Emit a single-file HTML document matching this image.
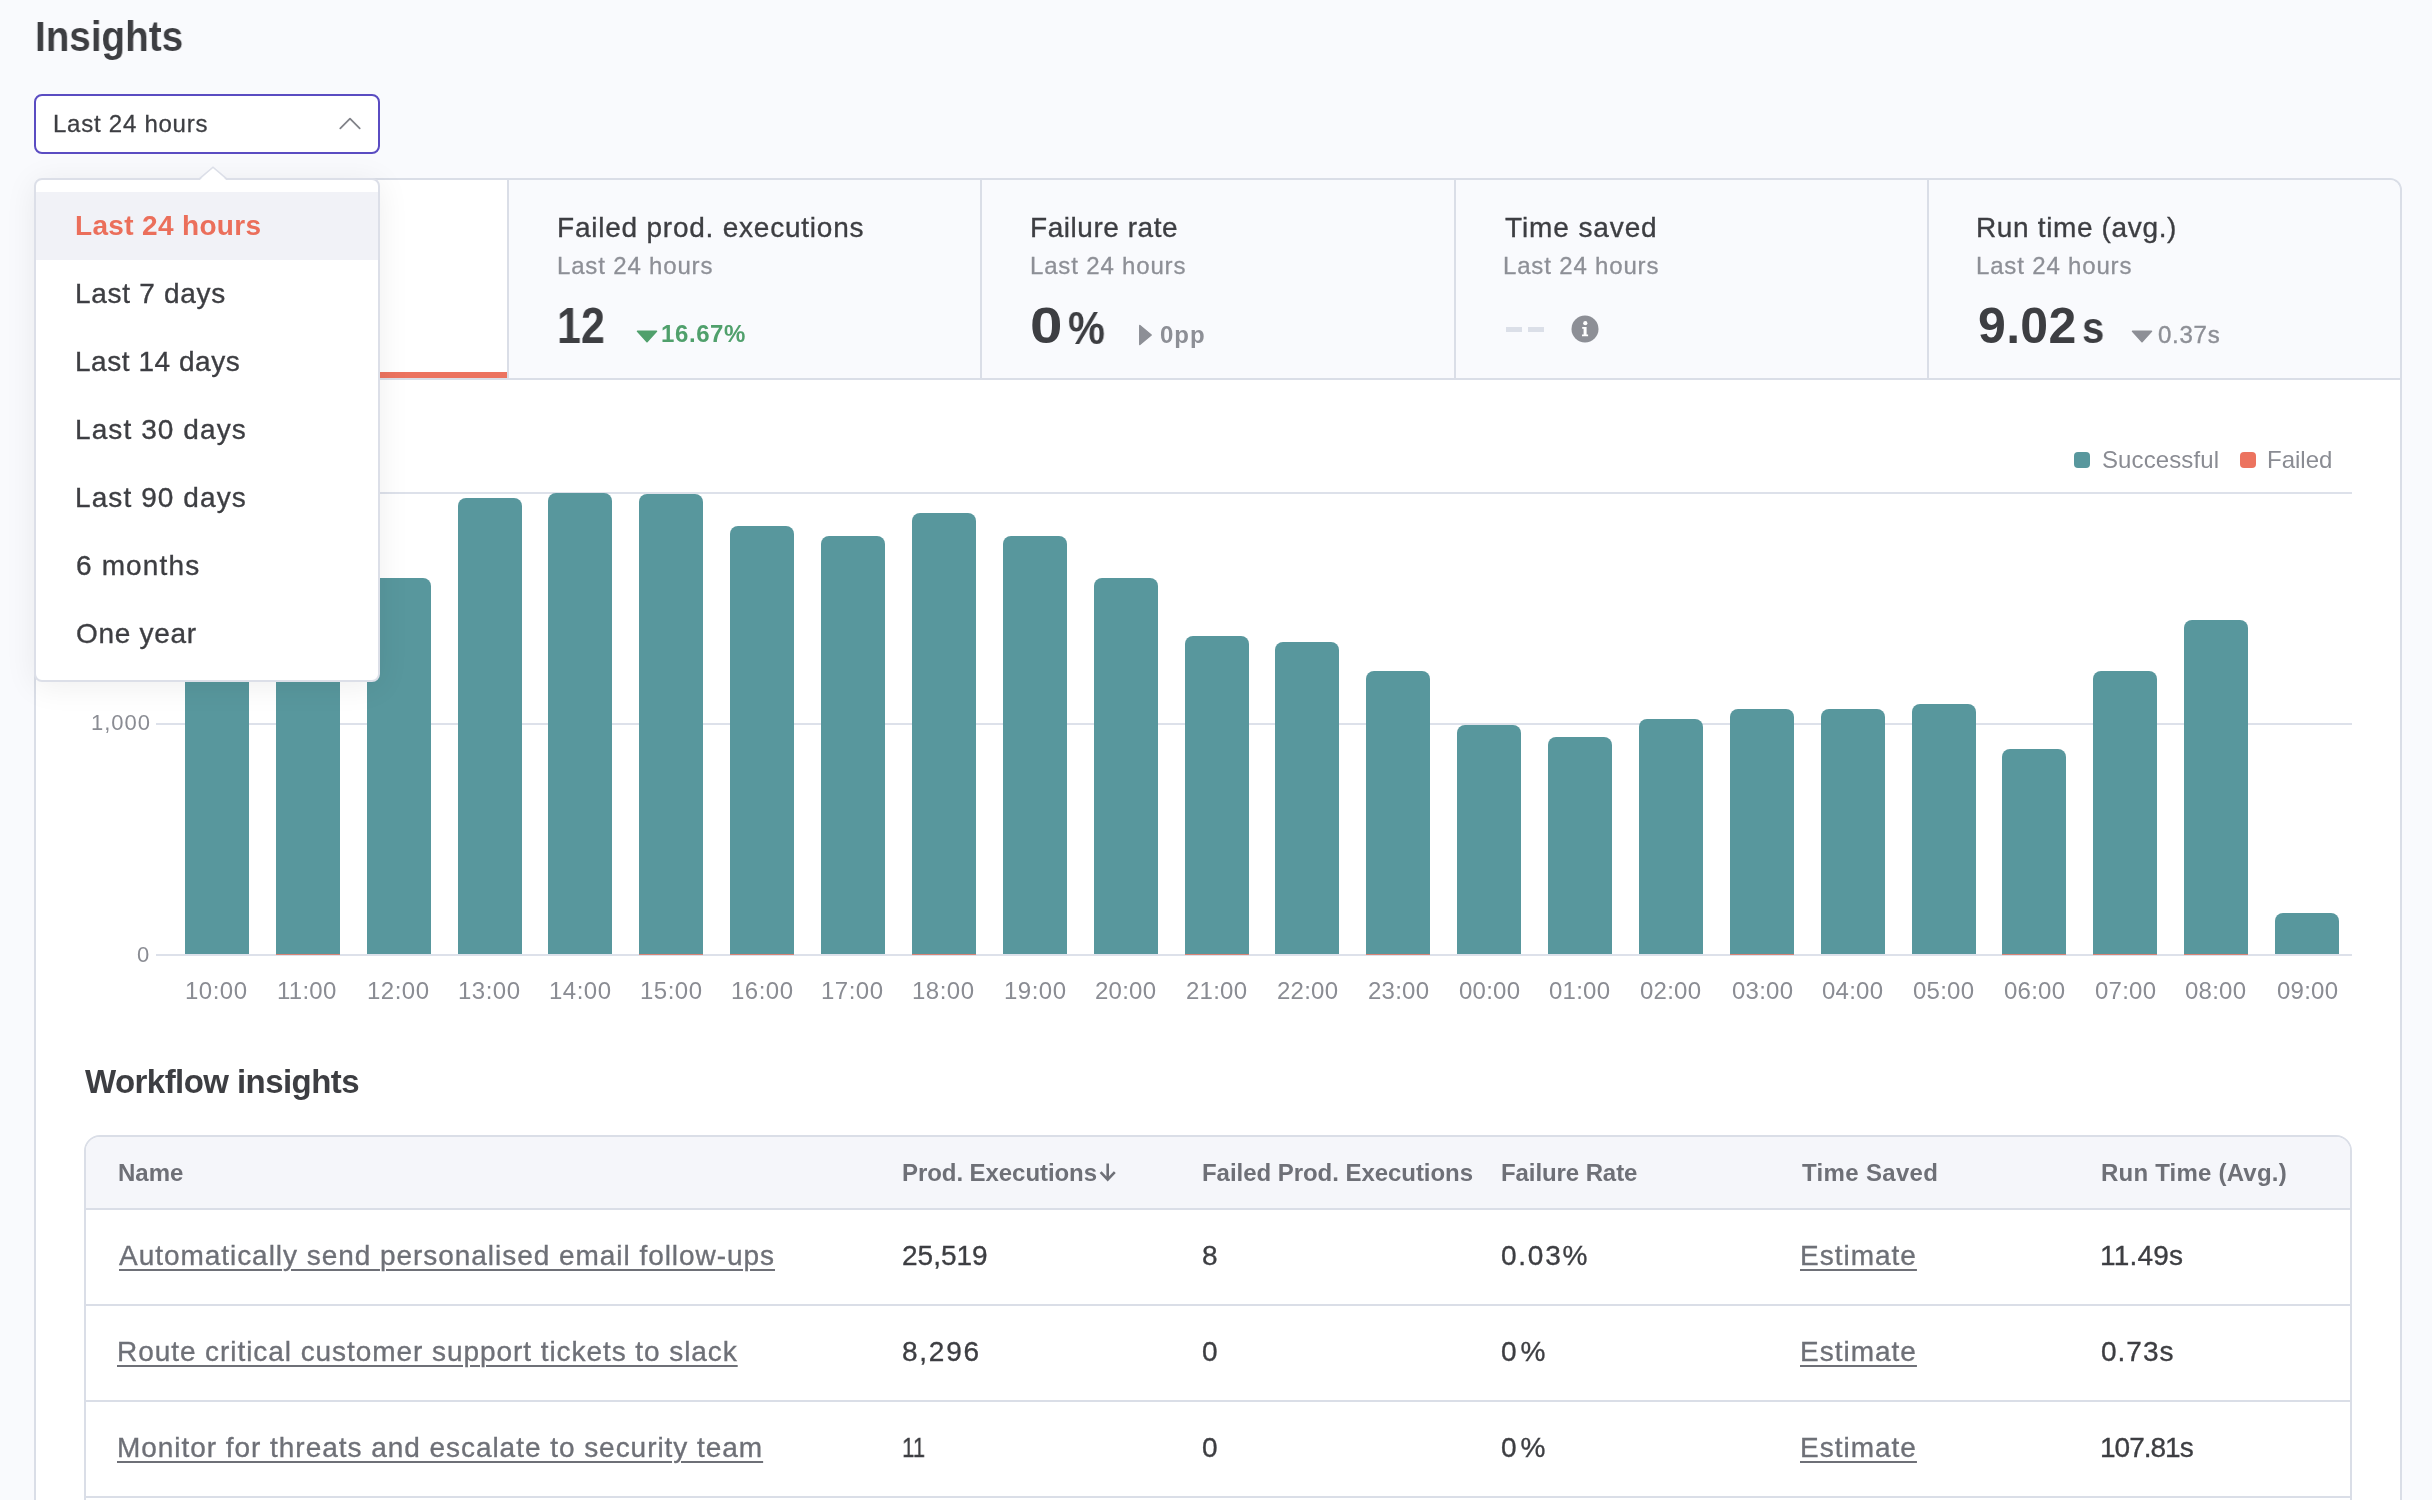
<!DOCTYPE html>
<html><head><meta charset="utf-8"><title>Insights</title>
<style>
html,body{margin:0;padding:0;width:2432px;height:1500px;overflow:hidden;background:#f9fafd;}
body{font-family:"Liberation Sans",sans-serif;}
#root{position:relative;width:2432px;height:1500px;overflow:hidden;background:#f9fafd;}
.t{position:absolute;white-space:nowrap;line-height:1;will-change:transform;}
.abs{position:absolute;}
.box{position:absolute;}
</style></head><body><div id="root">
<div class="t" style="left:35.00px;top:15.94px;font-size:42px;color:#3d3e42;font-weight:700;transform:scaleX(0.9196);transform-origin:0 0;">Insights</div>
<div class="box" style="left:34px;top:94px;width:346px;height:60px;border:2px solid #5a4cc2;border-radius:8px;background:#fff;box-sizing:border-box"></div>
<div class="t" style="left:53.00px;top:111.68px;font-size:24px;color:#3d3e42;-webkit-text-stroke:0.29px #3d3e42;letter-spacing:0.750px;">Last 24 hours</div>
<svg class="abs" style="left:336px;top:114px" width="28" height="18" viewBox="0 0 28 18"><path d="M4.3 14.3 L14 4.7 L23.7 14.3" fill="none" stroke="#808288" stroke-width="1.8" stroke-linecap="round" stroke-linejoin="round"/></svg>
<div class="box" style="left:34px;top:178px;width:2368px;height:1500px;border:2px solid #dadee7;border-radius:12px;background:#fff;box-sizing:border-box;overflow:hidden"><div class="abs" style="left:0;top:0;width:2364px;height:198px;background:#f9fafd"></div><div class="abs" style="left:0;top:0;width:473px;height:198px;background:#fff"></div><div class="abs" style="left:0;top:192px;width:471px;height:6px;background:#ec735f"></div><div class="abs" style="left:0;top:198px;width:2364px;height:2px;background:#dadee7"></div><div class="abs" style="left:471px;top:0;width:2px;height:198px;background:#dadee7"></div><div class="abs" style="left:944px;top:0;width:2px;height:198px;background:#dadee7"></div><div class="abs" style="left:1418px;top:0;width:2px;height:198px;background:#dadee7"></div><div class="abs" style="left:1891px;top:0;width:2px;height:198px;background:#dadee7"></div></div>
<div class="t" style="left:557.00px;top:214.29px;font-size:28px;color:#3d3e42;-webkit-text-stroke:0.34px #3d3e42;letter-spacing:0.773px;">Failed prod. executions</div>
<div class="t" style="left:557.00px;top:253.68px;font-size:24px;color:#8d8f96;-webkit-text-stroke:0.29px #8d8f96;letter-spacing:0.833px;">Last 24 hours</div>
<div class="t" style="left:1030.00px;top:214.29px;font-size:28px;color:#3d3e42;-webkit-text-stroke:0.34px #3d3e42;letter-spacing:0.545px;">Failure rate</div>
<div class="t" style="left:1030.00px;top:253.68px;font-size:24px;color:#8d8f96;-webkit-text-stroke:0.29px #8d8f96;letter-spacing:0.833px;">Last 24 hours</div>
<div class="t" style="left:1505.00px;top:214.29px;font-size:28px;color:#3d3e42;-webkit-text-stroke:0.34px #3d3e42;letter-spacing:0.889px;">Time saved</div>
<div class="t" style="left:1503.00px;top:253.68px;font-size:24px;color:#8d8f96;-webkit-text-stroke:0.29px #8d8f96;letter-spacing:0.833px;">Last 24 hours</div>
<div class="t" style="left:1976.00px;top:214.29px;font-size:28px;color:#3d3e42;-webkit-text-stroke:0.34px #3d3e42;letter-spacing:0.643px;">Run time (avg.)</div>
<div class="t" style="left:1976.00px;top:253.68px;font-size:24px;color:#8d8f96;-webkit-text-stroke:0.29px #8d8f96;letter-spacing:0.833px;">Last 24 hours</div>
<div class="t" style="left:86.00px;top:214.29px;font-size:28px;color:#3d3e42;-webkit-text-stroke:0.34px #3d3e42;">Prod. executions</div>
<div class="t" style="left:86.00px;top:253.68px;font-size:24px;color:#8d8f96;-webkit-text-stroke:0.29px #8d8f96;">Last 24 hours</div>
<div class="t" style="left:557.00px;top:301.17px;font-size:50px;color:#3d3e42;font-weight:700;transform:scaleX(0.8610);transform-origin:0 0;">12</div>
<svg class="abs" style="left:636px;top:330px" width="22" height="13" viewBox="0 0 22 13"><path d="M1.5 1.2 L20.5 1.2 L11 11.8 Z" fill="#50a06c" stroke="#50a06c" stroke-width="1.5" stroke-linejoin="round"/></svg>
<div class="t" style="left:661.00px;top:321.68px;font-size:24px;color:#50a06c;font-weight:700;letter-spacing:0.600px;">16.67%</div>
<div class="t" style="left:1030.00px;top:301.17px;font-size:50px;color:#3d3e42;font-weight:700;transform:scaleX(1.1667);transform-origin:0 0;">0</div>
<div class="t" style="left:1068.00px;top:303.71px;font-size:47px;color:#3d3e42;font-weight:700;transform:scaleX(0.8838);transform-origin:0 0;">%</div>
<svg class="abs" style="left:1138px;top:324px" width="15" height="22" viewBox="0 0 15 22"><path d="M1.8 1.5 L13.2 11 L1.8 20.5 Z" fill="#8d8f96" stroke="#8d8f96" stroke-width="1.5" stroke-linejoin="round"/></svg>
<div class="t" style="left:1160.00px;top:322.68px;font-size:24px;color:#8d8f96;font-weight:700;letter-spacing:1.000px;">0pp</div>
<div class="abs" style="left:1506px;top:327px;width:16px;height:5px;background:#dbdfe8"></div>
<div class="abs" style="left:1528px;top:327px;width:16px;height:5px;background:#dbdfe8"></div>
<svg class="abs" style="left:1571px;top:315px" width="28" height="28" viewBox="0 0 28 28"><circle cx="14" cy="14" r="13.5" fill="#8d8f96"/><circle cx="14.3" cy="8.2" r="2.1" fill="#fff"/><path d="M11.2 12 H15.6 V19.4 H17.1 V21.2 H11 V19.4 H12.6 V13.7 H11.2 Z" fill="#fff"/></svg>
<div class="t" style="left:1978.00px;top:301.17px;font-size:50px;color:#3d3e42;font-weight:700;letter-spacing:0.333px;">9.02</div>
<div class="t" style="left:2082.00px;top:305.40px;font-size:45px;color:#3d3e42;font-weight:700;transform:scaleX(0.8889);transform-origin:0 0;">s</div>
<svg class="abs" style="left:2131px;top:330px" width="22" height="13" viewBox="0 0 22 13"><path d="M1.5 1.2 L20.5 1.2 L11 11.8 Z" fill="#8d8f96" stroke="#8d8f96" stroke-width="1.5" stroke-linejoin="round"/></svg>
<div class="t" style="left:2158.00px;top:322.68px;font-size:24px;color:#8d8f96;letter-spacing:0.750px;-webkit-text-stroke:0.4px #8d8f96;">0.37s</div>
<div class="abs" style="left:2074px;top:452px;width:16px;height:16px;border-radius:4px;background:#58979d"></div>
<div class="t" style="left:2102.00px;top:447.68px;font-size:24px;color:#8a8c93;letter-spacing:0.111px;-webkit-text-stroke:0px;">Successful</div>
<div class="abs" style="left:2240px;top:452px;width:16px;height:16px;border-radius:4px;background:#ec735f"></div>
<div class="t" style="left:2267.00px;top:447.68px;font-size:24px;color:#8a8c93;-webkit-text-stroke:0px;">Failed</div>
<div class="abs" style="left:156px;top:492px;width:2196px;height:2px;background:#dde1ea"></div>
<div class="abs" style="left:156px;top:723px;width:2196px;height:2px;background:#dde1ea"></div>
<div class="abs" style="left:156px;top:954px;width:2196px;height:2px;background:#dde1ea"></div>
<div class="t" style="left:92.00px;top:481.37px;font-size:22px;color:#8a8c93;letter-spacing:0.500px;-webkit-text-stroke:0px;">2,000</div>
<div class="t" style="left:91.00px;top:712.37px;font-size:22px;color:#8a8c93;letter-spacing:1.000px;-webkit-text-stroke:0px;">1,000</div>
<div class="t" style="left:137.00px;top:944.37px;font-size:22px;color:#8a8c93;-webkit-text-stroke:0px;">0</div>
<div class="abs" style="left:185.00px;top:600px;width:64px;height:354px;border-radius:8px 8px 0 0;background:#58979d"></div>
<div class="t" style="left:185.00px;top:978.68px;font-size:24px;color:#8a8c93;letter-spacing:0.500px;-webkit-text-stroke:0px;">10:00</div>
<div class="abs" style="left:275.87px;top:610px;width:64px;height:344px;border-radius:8px 8px 0 0;background:#58979d"></div>
<div class="abs" style="left:275.87px;top:954px;width:64px;height:1px;background:#d98476"></div>
<div class="t" style="left:277.17px;top:978.68px;font-size:24px;color:#8a8c93;letter-spacing:0.250px;-webkit-text-stroke:0px;">11:00</div>
<div class="abs" style="left:366.74px;top:578px;width:64px;height:376px;border-radius:8px 8px 0 0;background:#58979d"></div>
<div class="t" style="left:367.35px;top:978.68px;font-size:24px;color:#8a8c93;letter-spacing:0.500px;-webkit-text-stroke:0px;">12:00</div>
<div class="abs" style="left:457.61px;top:498px;width:64px;height:456px;border-radius:8px 8px 0 0;background:#58979d"></div>
<div class="t" style="left:457.63px;top:978.68px;font-size:24px;color:#8a8c93;letter-spacing:0.500px;-webkit-text-stroke:0px;">13:00</div>
<div class="abs" style="left:548.48px;top:493px;width:64px;height:461px;border-radius:8px 8px 0 0;background:#58979d"></div>
<div class="t" style="left:548.70px;top:978.68px;font-size:24px;color:#8a8c93;letter-spacing:0.500px;-webkit-text-stroke:0px;">14:00</div>
<div class="abs" style="left:639.35px;top:494px;width:64px;height:460px;border-radius:8px 8px 0 0;background:#58979d"></div>
<div class="abs" style="left:639.35px;top:954px;width:64px;height:1px;background:#d98476"></div>
<div class="t" style="left:639.87px;top:978.68px;font-size:24px;color:#8a8c93;letter-spacing:0.500px;-webkit-text-stroke:0px;">15:00</div>
<div class="abs" style="left:730.22px;top:525.5px;width:64px;height:428.5px;border-radius:8px 8px 0 0;background:#58979d"></div>
<div class="abs" style="left:730.22px;top:954px;width:64px;height:1px;background:#d98476"></div>
<div class="t" style="left:731.33px;top:978.68px;font-size:24px;color:#8a8c93;letter-spacing:0.500px;-webkit-text-stroke:0px;">16:00</div>
<div class="abs" style="left:821.09px;top:536px;width:64px;height:418px;border-radius:8px 8px 0 0;background:#58979d"></div>
<div class="t" style="left:821.22px;top:978.68px;font-size:24px;color:#8a8c93;letter-spacing:0.500px;-webkit-text-stroke:0px;">17:00</div>
<div class="abs" style="left:911.96px;top:512.5px;width:64px;height:441.5px;border-radius:8px 8px 0 0;background:#58979d"></div>
<div class="abs" style="left:911.96px;top:954px;width:64px;height:1px;background:#d98476"></div>
<div class="t" style="left:912.39px;top:978.68px;font-size:24px;color:#8a8c93;letter-spacing:0.500px;-webkit-text-stroke:0px;">18:00</div>
<div class="abs" style="left:1002.83px;top:536px;width:64px;height:418px;border-radius:8px 8px 0 0;background:#58979d"></div>
<div class="t" style="left:1004.24px;top:978.68px;font-size:24px;color:#8a8c93;letter-spacing:0.500px;-webkit-text-stroke:0px;">19:00</div>
<div class="abs" style="left:1093.70px;top:578px;width:64px;height:376px;border-radius:8px 8px 0 0;background:#58979d"></div>
<div class="t" style="left:1094.74px;top:978.68px;font-size:24px;color:#8a8c93;letter-spacing:0.250px;-webkit-text-stroke:0px;">20:00</div>
<div class="abs" style="left:1184.57px;top:635.5px;width:64px;height:318.5px;border-radius:8px 8px 0 0;background:#58979d"></div>
<div class="abs" style="left:1184.57px;top:954px;width:64px;height:1px;background:#d98476"></div>
<div class="t" style="left:1185.85px;top:978.68px;font-size:24px;color:#8a8c93;letter-spacing:0.250px;-webkit-text-stroke:0px;">21:00</div>
<div class="abs" style="left:1275.43px;top:642px;width:64px;height:312px;border-radius:8px 8px 0 0;background:#58979d"></div>
<div class="t" style="left:1277.15px;top:978.68px;font-size:24px;color:#8a8c93;letter-spacing:0.250px;-webkit-text-stroke:0px;">22:00</div>
<div class="abs" style="left:1366.30px;top:671px;width:64px;height:283px;border-radius:8px 8px 0 0;background:#58979d"></div>
<div class="abs" style="left:1366.30px;top:954px;width:64px;height:1px;background:#d98476"></div>
<div class="t" style="left:1368.26px;top:978.68px;font-size:24px;color:#8a8c93;letter-spacing:0.250px;-webkit-text-stroke:0px;">23:00</div>
<div class="abs" style="left:1457.17px;top:724.5px;width:64px;height:229.5px;border-radius:8px 8px 0 0;background:#58979d"></div>
<div class="t" style="left:1458.76px;top:978.68px;font-size:24px;color:#8a8c93;letter-spacing:0.250px;-webkit-text-stroke:0px;">00:00</div>
<div class="abs" style="left:1548.04px;top:737px;width:64px;height:217px;border-radius:8px 8px 0 0;background:#58979d"></div>
<div class="t" style="left:1549.07px;top:978.68px;font-size:24px;color:#8a8c93;letter-spacing:0.250px;-webkit-text-stroke:0px;">01:00</div>
<div class="abs" style="left:1638.91px;top:719px;width:64px;height:235px;border-radius:8px 8px 0 0;background:#58979d"></div>
<div class="t" style="left:1640.37px;top:978.68px;font-size:24px;color:#8a8c93;letter-spacing:0.250px;-webkit-text-stroke:0px;">02:00</div>
<div class="abs" style="left:1729.78px;top:709px;width:64px;height:245px;border-radius:8px 8px 0 0;background:#58979d"></div>
<div class="abs" style="left:1729.78px;top:954px;width:64px;height:1px;background:#d98476"></div>
<div class="t" style="left:1731.67px;top:978.68px;font-size:24px;color:#8a8c93;letter-spacing:0.250px;-webkit-text-stroke:0px;">03:00</div>
<div class="abs" style="left:1820.65px;top:709px;width:64px;height:245px;border-radius:8px 8px 0 0;background:#58979d"></div>
<div class="t" style="left:1821.98px;top:978.68px;font-size:24px;color:#8a8c93;letter-spacing:0.250px;-webkit-text-stroke:0px;">04:00</div>
<div class="abs" style="left:1911.52px;top:703.5px;width:64px;height:250.5px;border-radius:8px 8px 0 0;background:#58979d"></div>
<div class="t" style="left:1913.28px;top:978.68px;font-size:24px;color:#8a8c93;letter-spacing:0.250px;-webkit-text-stroke:0px;">05:00</div>
<div class="abs" style="left:2002.39px;top:749px;width:64px;height:205px;border-radius:8px 8px 0 0;background:#58979d"></div>
<div class="abs" style="left:2002.39px;top:954px;width:64px;height:1px;background:#d98476"></div>
<div class="t" style="left:2003.59px;top:978.68px;font-size:24px;color:#8a8c93;letter-spacing:0.250px;-webkit-text-stroke:0px;">06:00</div>
<div class="abs" style="left:2093.26px;top:670.5px;width:64px;height:283.5px;border-radius:8px 8px 0 0;background:#58979d"></div>
<div class="abs" style="left:2093.26px;top:954px;width:64px;height:1px;background:#d98476"></div>
<div class="t" style="left:2094.89px;top:978.68px;font-size:24px;color:#8a8c93;letter-spacing:0.250px;-webkit-text-stroke:0px;">07:00</div>
<div class="abs" style="left:2184.13px;top:619.5px;width:64px;height:334.5px;border-radius:8px 8px 0 0;background:#58979d"></div>
<div class="abs" style="left:2184.13px;top:954px;width:64px;height:1px;background:#d98476"></div>
<div class="t" style="left:2185.20px;top:978.68px;font-size:24px;color:#8a8c93;letter-spacing:0.250px;-webkit-text-stroke:0px;">08:00</div>
<div class="abs" style="left:2275.00px;top:912.5px;width:64px;height:41.5px;border-radius:8px 8px 0 0;background:#58979d"></div>
<div class="t" style="left:2276.50px;top:978.68px;font-size:24px;color:#8a8c93;letter-spacing:0.250px;-webkit-text-stroke:0px;">09:00</div>
<div class="t" style="left:85.00px;top:1065.06px;font-size:33px;color:#3d3e42;font-weight:700;letter-spacing:-0.562px;">Workflow insights</div>
<div class="box" style="left:84px;top:1135px;width:2268px;height:500px;border:2px solid #dadee7;border-radius:16px;background:#fff;box-sizing:border-box;overflow:hidden"><div class="abs" style="left:0;top:0;width:2264px;height:71px;background:#f5f6fa"></div><div class="abs" style="left:0;top:71px;width:2264px;height:2px;background:#dadee7"></div><div class="abs" style="left:0;top:167px;width:2264px;height:2px;background:#dadee7"></div><div class="abs" style="left:0;top:263px;width:2264px;height:2px;background:#dadee7"></div><div class="abs" style="left:0;top:359px;width:2264px;height:2px;background:#dadee7"></div></div>
<div class="t" style="left:118.00px;top:1160.68px;font-size:24px;color:#6e7077;font-weight:700;">Name</div>
<div class="t" style="left:902.00px;top:1160.68px;font-size:24px;color:#6e7077;font-weight:700;letter-spacing:-0.067px;">Prod. Executions</div>
<div class="t" style="left:1201.50px;top:1160.68px;font-size:24px;color:#6e7077;font-weight:700;letter-spacing:-0.045px;">Failed Prod. Executions</div>
<div class="t" style="left:1501.00px;top:1160.68px;font-size:24px;color:#6e7077;font-weight:700;letter-spacing:-0.091px;">Failure Rate</div>
<div class="t" style="left:1802.00px;top:1160.68px;font-size:24px;color:#6e7077;font-weight:700;letter-spacing:0.333px;">Time Saved</div>
<div class="t" style="left:2101.00px;top:1160.68px;font-size:24px;color:#6e7077;font-weight:700;letter-spacing:0.214px;">Run Time (Avg.)</div>
<svg class="abs" style="left:1099px;top:1162px" width="18" height="20" viewBox="0 0 18 20"><path d="M8.7 1.5 V18.3 M1.6 10.2 L8.7 17.7 L15.8 10.2" fill="none" stroke="#6e7077" stroke-width="2.6"/></svg>
<div class="t" style="left:119.00px;top:1242.29px;font-size:28px;color:#6e7077;-webkit-text-stroke:0.34px #6e7077;letter-spacing:0.957px;text-decoration:underline;text-underline-offset:4px;text-decoration-thickness:2px;">Automatically send personalised email follow-ups</div>
<div class="t" style="left:902.00px;top:1242.29px;font-size:28px;color:#3d3e42;-webkit-text-stroke:0.34px #3d3e42;">25,519</div>
<div class="t" style="left:1202.00px;top:1242.29px;font-size:28px;color:#3d3e42;-webkit-text-stroke:0.34px #3d3e42;">8</div>
<div class="t" style="left:1501.00px;top:1242.29px;font-size:28px;color:#3d3e42;-webkit-text-stroke:0.34px #3d3e42;letter-spacing:1.750px;">0.03%</div>
<div class="t" style="left:1800.00px;top:1242.29px;font-size:28px;color:#6e7077;-webkit-text-stroke:0.34px #6e7077;letter-spacing:1.000px;text-decoration:underline;text-underline-offset:4px;text-decoration-thickness:2px;">Estimate</div>
<div class="t" style="left:2100.00px;top:1242.29px;font-size:28px;color:#3d3e42;-webkit-text-stroke:0.34px #3d3e42;letter-spacing:0.200px;">11.49s</div>
<div class="t" style="left:117.00px;top:1338.29px;font-size:28px;color:#6e7077;-webkit-text-stroke:0.34px #6e7077;letter-spacing:0.936px;text-decoration:underline;text-underline-offset:4px;text-decoration-thickness:2px;">Route critical customer support tickets to slack</div>
<div class="t" style="left:902.00px;top:1338.29px;font-size:28px;color:#3d3e42;-webkit-text-stroke:0.34px #3d3e42;letter-spacing:1.750px;">8,296</div>
<div class="t" style="left:1202.00px;top:1338.29px;font-size:28px;color:#3d3e42;-webkit-text-stroke:0.34px #3d3e42;">0</div>
<div class="t" style="left:1501.00px;top:1338.29px;font-size:28px;color:#3d3e42;-webkit-text-stroke:0.34px #3d3e42;letter-spacing:4.000px;">0%</div>
<div class="t" style="left:1800.00px;top:1338.29px;font-size:28px;color:#6e7077;-webkit-text-stroke:0.34px #6e7077;letter-spacing:1.000px;text-decoration:underline;text-underline-offset:4px;text-decoration-thickness:2px;">Estimate</div>
<div class="t" style="left:2101.00px;top:1338.29px;font-size:28px;color:#3d3e42;-webkit-text-stroke:0.34px #3d3e42;letter-spacing:1.000px;">0.73s</div>
<div class="t" style="left:117.00px;top:1434.29px;font-size:28px;color:#6e7077;-webkit-text-stroke:0.34px #6e7077;letter-spacing:0.958px;text-decoration:underline;text-underline-offset:4px;text-decoration-thickness:2px;">Monitor for threats and escalate to security team</div>
<div class="t" style="left:902.00px;top:1434.29px;font-size:28px;color:#3d3e42;-webkit-text-stroke:0.34px #3d3e42;transform:scaleX(0.7979);transform-origin:0 0;">11</div>
<div class="t" style="left:1202.00px;top:1434.29px;font-size:28px;color:#3d3e42;-webkit-text-stroke:0.34px #3d3e42;">0</div>
<div class="t" style="left:1501.00px;top:1434.29px;font-size:28px;color:#3d3e42;-webkit-text-stroke:0.34px #3d3e42;letter-spacing:4.000px;">0%</div>
<div class="t" style="left:1800.00px;top:1434.29px;font-size:28px;color:#6e7077;-webkit-text-stroke:0.34px #6e7077;letter-spacing:1.000px;text-decoration:underline;text-underline-offset:4px;text-decoration-thickness:2px;">Estimate</div>
<div class="t" style="left:2100.00px;top:1434.29px;font-size:28px;color:#3d3e42;-webkit-text-stroke:0.34px #3d3e42;letter-spacing:-1.000px;">107.81s</div>
<div class="box" style="left:34px;top:178px;width:346px;height:504px;border:2px solid #dcdfe8;border-radius:8px;background:#fff;box-sizing:border-box;box-shadow:0 4px 32px rgba(0,0,0,0.07)"></div>
<div class="abs" style="left:36px;top:192px;width:342px;height:68px;background:#f1f2f7"></div>
<svg class="abs" style="left:199px;top:165px" width="28" height="16" viewBox="0 0 28 16"><path d="M0.6 15.2 L14 1.9 L27.4 15.2 Z" fill="#fff"/><path d="M0.2 14 L14 2.2 L27.8 14" fill="none" stroke="#dcdfe8" stroke-width="1.6"/></svg>
<div class="t" style="left:75.00px;top:212.29px;font-size:28px;color:#eb6f5b;font-weight:700;letter-spacing:0.333px;">Last 24 hours</div>
<div class="t" style="left:75.00px;top:280.29px;font-size:28px;color:#3d3e42;-webkit-text-stroke:0.34px #3d3e42;letter-spacing:0.700px;">Last 7 days</div>
<div class="t" style="left:75.00px;top:348.29px;font-size:28px;color:#3d3e42;-webkit-text-stroke:0.34px #3d3e42;letter-spacing:0.545px;">Last 14 days</div>
<div class="t" style="left:75.00px;top:416.29px;font-size:28px;color:#3d3e42;-webkit-text-stroke:0.34px #3d3e42;letter-spacing:1.091px;">Last 30 days</div>
<div class="t" style="left:75.00px;top:484.29px;font-size:28px;color:#3d3e42;-webkit-text-stroke:0.34px #3d3e42;letter-spacing:1.091px;">Last 90 days</div>
<div class="t" style="left:76.00px;top:552.29px;font-size:28px;color:#3d3e42;-webkit-text-stroke:0.34px #3d3e42;letter-spacing:1.143px;">6 months</div>
<div class="t" style="left:76.00px;top:620.29px;font-size:28px;color:#3d3e42;-webkit-text-stroke:0.34px #3d3e42;letter-spacing:0.714px;">One year</div>
</div></body></html>
